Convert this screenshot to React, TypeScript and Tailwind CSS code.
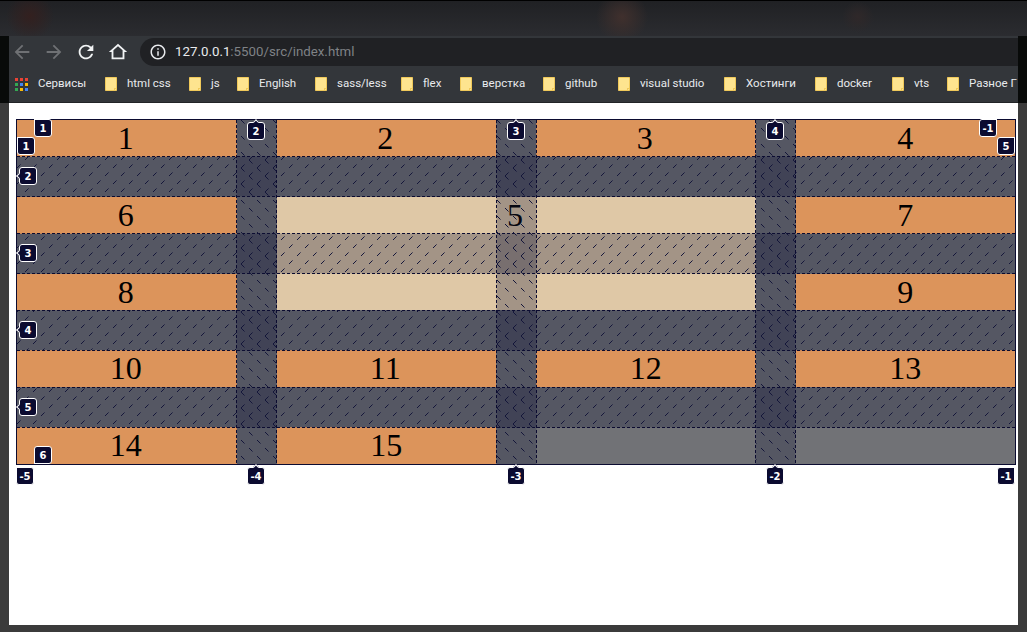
import React from 'react';

const bookmarks = [
  { name: 'html css', width: 'w-[84px]' },
  { name: 'js', width: 'w-[48px]' },
  { name: 'English', width: 'w-[78px]' },
  { name: 'sass/less', width: 'w-[86px]' },
  { name: 'flex', width: 'w-[59px]' },
  { name: 'верстка', width: 'w-[83px]' },
  { name: 'github', width: 'w-[75px]' },
  { name: 'visual studio', width: 'w-[106px]' },
  { name: 'Хостинги', width: 'w-[91px]' },
  { name: 'docker', width: 'w-[77px]' },
  { name: 'vts', width: 'w-[55px]' },
  { name: 'Разное Г', width: 'w-[71px]' },
];

// grid line labels, positions are relative to the grid box
const labels = [
  { text: '1', pos: 'left-[18px] top-0', arrow: 'top-[-1px] left-[-1px]' },
  { text: '2', pos: 'left-[231px] top-[3px]', arrow: 'top-[-3px] left-[6px] rotate-45' },
  { text: '3', pos: 'left-[491px] top-[3px]', arrow: 'top-[-3px] left-[6px] rotate-45' },
  { text: '4', pos: 'left-[750px] top-[3px]', arrow: 'top-[-3px] left-[6px] rotate-45' },
  { text: '-1', pos: 'left-[963px] top-0', arrow: 'top-[-1px] right-[-1px] rotate-90' },
  { text: '1', pos: 'left-px top-[18px]', arrow: 'top-[-1px] left-[-1px]' },
  { text: '2', pos: 'left-[3px] top-[48px]', arrow: 'top-[6px] left-[-3px] -rotate-45' },
  { text: '3', pos: 'left-[3px] top-[125px]', arrow: 'top-[6px] left-[-3px] -rotate-45' },
  { text: '4', pos: 'left-[3px] top-[202px]', arrow: 'top-[6px] left-[-3px] -rotate-45' },
  { text: '5', pos: 'left-[3px] top-[279px]', arrow: 'top-[6px] left-[-3px] -rotate-45' },
  { text: '5', pos: 'left-[981px] top-[18px]', arrow: 'top-[-1px] right-[-1px] rotate-90' },
  { text: '6', pos: 'left-[18px] top-[327px]', arrow: 'bottom-[-1px] left-[-1px] -rotate-90' },
  { text: '-5', pos: 'left-0 top-[348px]', arrow: 'top-[-1px] left-[-1px]' },
  { text: '-4', pos: 'left-[231px] top-[348px]', arrow: 'top-[-3px] left-[6px] rotate-45' },
  { text: '-3', pos: 'left-[491px] top-[348px]', arrow: 'top-[-3px] left-[6px] rotate-45' },
  { text: '-2', pos: 'left-[750px] top-[348px]', arrow: 'top-[-3px] left-[6px] rotate-45' },
  { text: '-1', pos: 'left-[981px] top-[348px]', arrow: 'top-[-1px] right-[-1px] rotate-90' },
];

const Cell = ({ children, tight }: { children: React.ReactNode; tight?: boolean }) => (
  <div className={`bg-[#dc945b] text-center ${tight ? 'pr-[2px]' : ''}`}>{children}</div>
);

const FolderIcon = () => (
  <svg viewBox="0 0 12 14" className="w-3 h-[14px] shrink-0">
    <path d="M0.5 0.5H11.5V13.5H0.5Z" fill="#fee48f" stroke="#f0c95a" />
    <path d="M9 11H12V12H10V14H9Z" fill="#f0c95a" />
  </svg>
);

const AppsIcon = () => (
  <div className="grid grid-cols-3 gap-[2px] w-[13px] h-[13px] shrink-0">
    <span className="bg-[#ea4335]" />
    <span className="bg-[#ea4335]" />
    <span className="bg-[#ea4335]" />
    <span className="bg-[#34a853]" />
    <span className="bg-[#4285f4]" />
    <span className="bg-[#fbbc05]" />
    <span className="bg-[#34a853]" />
    <span className="bg-[#fbbc05]" />
    <span className="bg-[#4285f4]" />
  </div>
);

const NavIcon = ({ d, className }: { d: string; className: string }) => (
  <svg viewBox="0 0 24 24" className={`w-[22px] h-[22px] ${className}`} fill="currentColor" fillRule="evenodd">
    <path d={d} />
  </svg>
);

// devtools style overlay for the gaps
const GapOverlay = () => {
  const rowGaps = [36.5, 113.5, 190.5, 267.5];
  const colGaps = [219.5, 479.5, 738.5];
  return (
    <svg className="absolute inset-0 w-[998px] h-[344px]" viewBox="0 0 998 344">
      <defs>
        <pattern id="hatchRow" patternUnits="userSpaceOnUse" width="16" height="16">
          <line x1="0" y1="16" x2="16" y2="0" stroke="#14163a" strokeDasharray="5 6.31" />
        </pattern>
        <pattern id="hatchCol" patternUnits="userSpaceOnUse" width="16" height="16">
          <line x1="0" y1="0" x2="16" y2="16" stroke="#14163a" strokeDasharray="5 6.31" />
        </pattern>
      </defs>
      {rowGaps.map((y) => (
        <g key={y}>
          <rect x="0" y={y} width="998" height="40" fill="#121636" fillOpacity="0.29" />
          <rect x="0" y={y} width="998" height="40" fill="url(#hatchRow)" />
          <line x1="0" x2="998" y1={y} y2={y} stroke="#0b0b30" strokeDasharray="3 2" />
          <line x1="0" x2="998" y1={y + 40} y2={y + 40} stroke="#0b0b30" strokeDasharray="3 2" />
        </g>
      ))}
      {colGaps.map((x) => (
        <g key={x}>
          <rect x={x} y="0" width="40" height="344" fill="#121636" fillOpacity="0.29" />
          <rect x={x} y="0" width="40" height="344" fill="url(#hatchCol)" />
          <line y1="0" y2="344" x1={x} x2={x} stroke="#0b0b30" strokeDasharray="3 2" />
          <line y1="0" y2="344" x1={x + 40} x2={x + 40} stroke="#0b0b30" strokeDasharray="3 2" />
        </g>
      ))}
    </svg>
  );
};

export default function App() {
  return (
    <div className="w-[1027px] h-[632px] overflow-hidden flex flex-col bg-[#3b3b3b] font-['Roboto',sans-serif]">
      {/* Title bar */}
      <div className="h-9 shrink-0 border-t border-black bg-[radial-gradient(circle_at_30px_15px,#33201f_0,transparent_24px),radial-gradient(circle_at_622px_16px,#40302d_0,transparent_26px),radial-gradient(circle_at_858px_16px,#2f2829_0,transparent_16px),linear-gradient(to_bottom,#202124,#2b2c30)]" />

      {/* Browser chrome */}
      <div className="shrink-0 bg-[#080a09] px-[9px]">
        <div className="flex items-center h-[30px] pt-[2px] pl-[2px] bg-[#33363a]">
          <div className="flex gap-[10px]">
            <NavIcon className="text-[#6f7174]" d="M20 11H7.83l5.59-5.59L12 4l-8 8 8 8 1.41-1.41L7.83 13H20v-2z" />
            <NavIcon className="text-[#6f7174]" d="M12 4l-1.41 1.41L16.17 11H4v2h12.17l-5.58 5.59L12 20l8-8z" />
            <NavIcon className="text-[#f1f3f4]" d="M17.65 6.35A7.958 7.958 0 0012 4c-4.42 0-7.99 3.58-7.99 8s3.57 8 7.99 8c3.73 0 6.84-2.55 7.73-6h-2.08A5.99 5.99 0 0112 18c-3.31 0-6-2.69-6-6s2.69-6 6-6c1.66 0 3.14.69 4.22 1.78L13 11h7V4l-2.35 2.35z" />
            <NavIcon className="text-[#f1f3f4]" d="M12 3L2 12h3v8h14v-8h3L12 3zm0 2.7l5 4.5V18H7v-7.8l5-4.5z" />
          </div>
          <div className="ml-[11px] flex-1 h-7 rounded-l-[14px] bg-[#202124] flex items-center pl-[9px] gap-[8px] text-[13.3px]">
            <svg viewBox="0 0 24 24" className="w-[18px] h-[18px] text-[#e8eaed]" fill="currentColor">
              <path d="M11 7h2v2h-2zm0 4h2v6h-2zm1-9C6.48 2 2 6.48 2 12s4.48 10 10 10 10-4.48 10-10S17.52 2 12 2zm0 18c-4.41 0-8-3.59-8-8s3.59-8 8-8 8 3.59 8 8-3.59 8-8 8z" />
            </svg>
            <span>
              <span className="text-[#e8eaed]">127.0.0.1</span>
              <span className="text-[#7f8286]">:5500/src/index.html</span>
            </span>
          </div>
        </div>
        <div className="flex items-center h-[37px] pl-[6px] bg-[#33363a] border-b border-[#222427] text-[11.5px] text-[#e8eaed] whitespace-nowrap overflow-hidden">
          <AppsIcon />
          <span className="ml-[10px] w-[67px] shrink-0">Сервисы</span>
          {bookmarks.map((b) => (
            <div key={b.name} className={`flex items-center gap-[10px] shrink-0 ${b.width}`}>
              <FolderIcon />
              <span>{b.name}</span>
            </div>
          ))}
        </div>
      </div>

      {/* Page */}
      <div className="flex-1 mx-[9px] mb-[7px] bg-white pt-4 pl-[7px]">
        <div className="relative w-[1000px]">
          <div className="grid grid-cols-4 gap-10 border border-[#0b0b30] bg-[#717276] font-['Liberation_Serif',serif] text-[32px] leading-[36.8px] text-black">
            <Cell tight>1</Cell>
            <Cell tight>2</Cell>
            <Cell tight>3</Cell>
            <Cell>4</Cell>
            <Cell tight>6</Cell>
            <div className="col-span-2 row-span-2 bg-[#dfc8a6] text-center pr-[2px]">5</div>
            <Cell>7</Cell>
            <Cell tight>8</Cell>
            <Cell>9</Cell>
            <Cell tight>10</Cell>
            <Cell tight>11</Cell>
            <Cell>12</Cell>
            <Cell>13</Cell>
            <Cell tight>14</Cell>
            <Cell>15</Cell>
          </div>
          <div className="absolute left-px top-px">
            <GapOverlay />
          </div>
          {labels.map((l) => (
            <div
              key={l.text + l.pos}
              className={`absolute ${l.pos} w-[18px] h-[18px] rounded-[3px] border border-white bg-[#0b0b30] flex items-center justify-center text-white text-[10px] font-bold font-['DejaVu_Sans',sans-serif]`}
            >
              <span className={`absolute ${l.arrow} w-[4px] h-[4px] border-t border-l border-white bg-[#0b0b30]`} />
              <span className="relative">{l.text}</span>
            </div>
          ))}
        </div>
      </div>
    </div>
  );
}
